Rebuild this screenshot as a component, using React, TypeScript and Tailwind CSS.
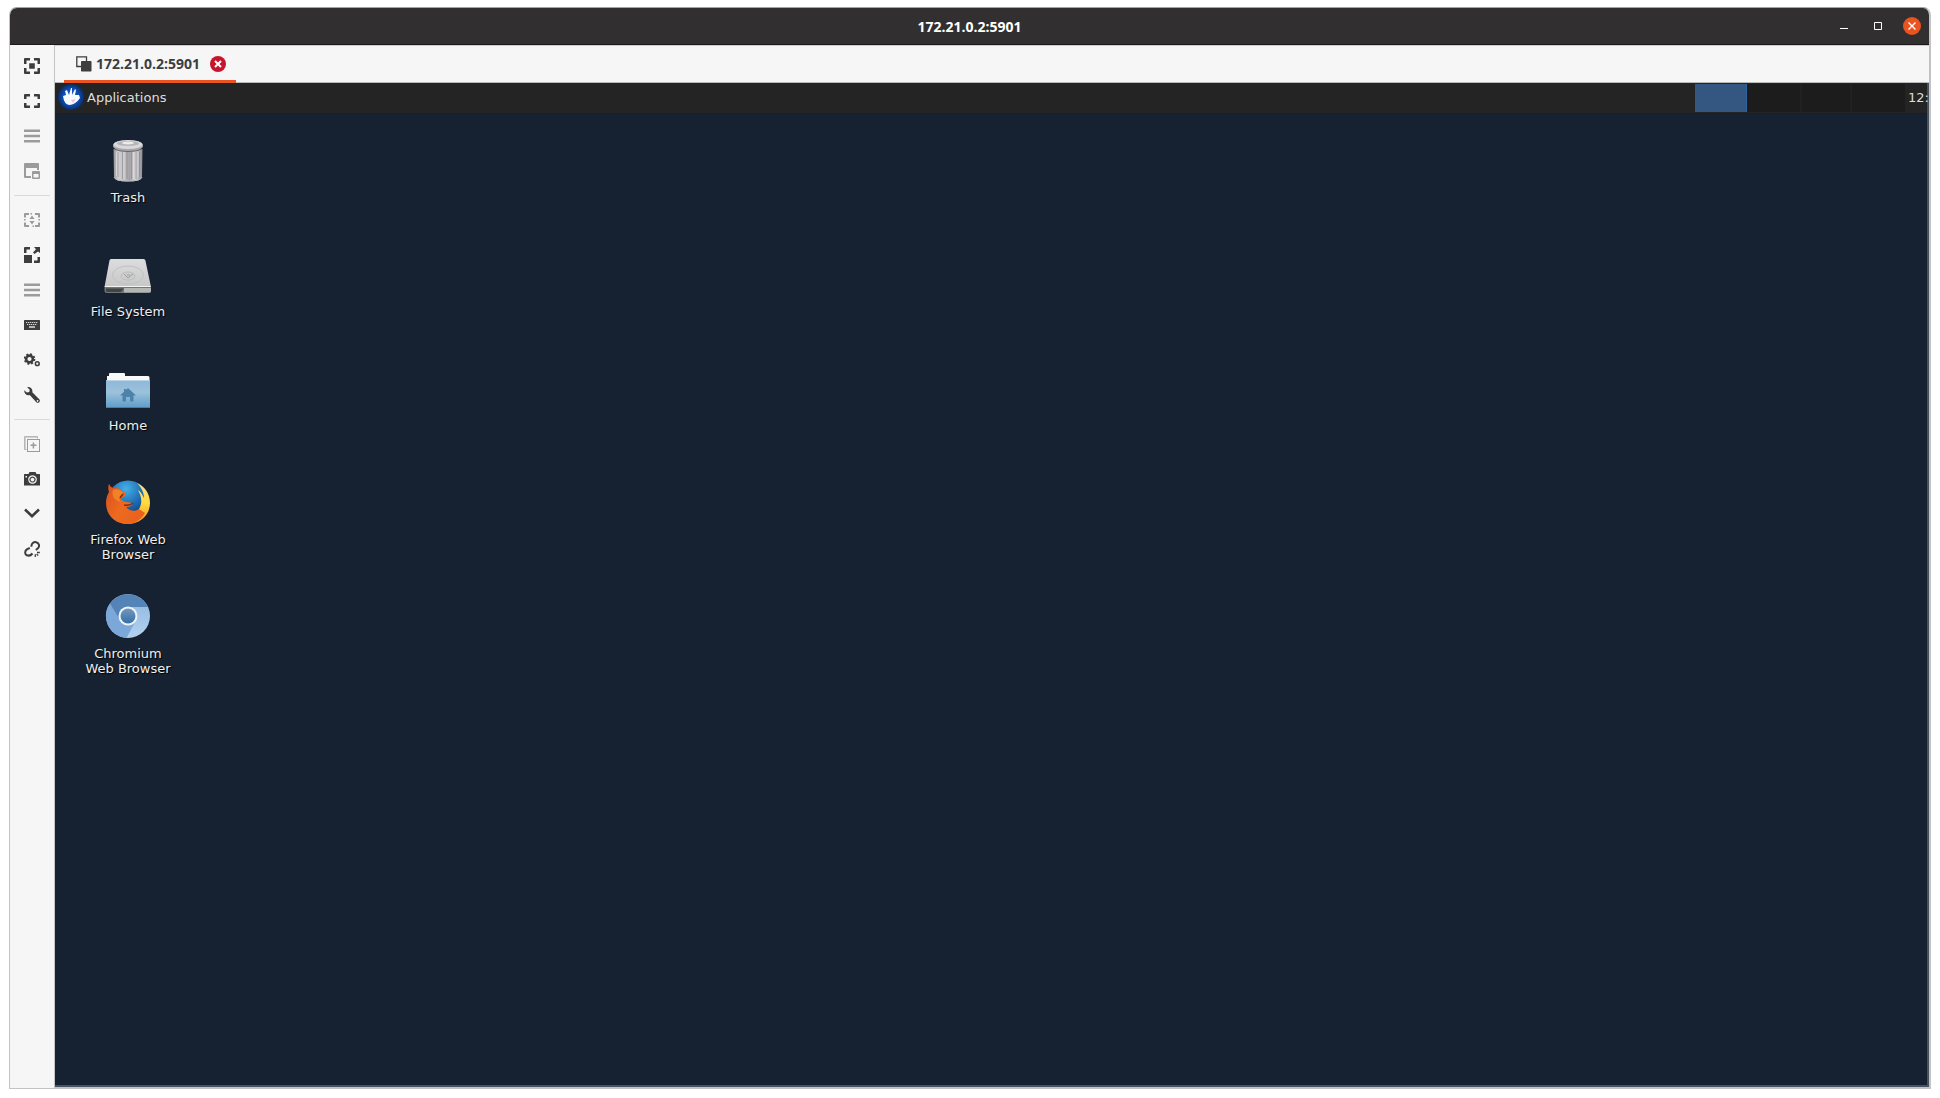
import type { ReactNode } from 'react';

interface ToolItem {
  label: string;
  muted?: boolean;
  icon: ReactNode;
}

interface DesktopItem {
  lines: string[];
  icon: ReactNode;
}

const menuIcon = <path fill="currentColor" d="M0 1.5h16v2.500H0zM0 6.700h16v2.500H0zM0 12h16v2.500H0z" />;

const toolGroups: ToolItem[][] = [
  [
    {
      label: 'Resize window to fit',
      icon: (
        <path
          fill="currentColor"
          d="M0 6V1Q0 0 1 0H6V2.500H2.500V6ZM10 0H15Q16 0 16 1V6H13.500V2.500H10ZM0 10H2.500V13.500H6V16H1Q0 16 0 15ZM13.500 10H16V15Q16 16 15 16H10V13.500H13.500ZM5.200 5.200H10.800V10.800H5.200Z"
        />
      ),
    },
    {
      label: 'Toggle fullscreen',
      icon: (
        <path
          fill="currentColor"
          d="M0 6V2Q0 1 1 1H6V3.500H2.500V6ZM10 1H15Q16 1 16 2V6H13.500V3.500H10ZM0 10H2.500V12.500H6V15H1Q0 15 0 14ZM13.500 10H16V14Q16 15 15 15H10V12.500H13.500Z"
        />
      ),
    },
    { label: 'Multi monitor', muted: true, icon: menuIcon },
    {
      label: 'Switch tab pages',
      muted: true,
      icon: (
        <>
          <path fill="currentColor" d="M1 0H14Q15 0 15 1V7H13V5H2V13H7V15H1Q0 15 0 14V1Q0 0 1 0Z" />
          <path fill="currentColor" fillRule="evenodd" d="M9 8h6q1 0 1 1v6q0 1-1 1H9q-1 0-1-1V9q0-1 1-1zM9.500 11v3.500h5V11z" />
        </>
      ),
    },
  ],
  [
    {
      label: 'Dynamic resolution',
      muted: true,
      icon: (
        <>
          <path
            fill="currentColor"
            d="M0 5.500V2Q0 1 1 1H5V3H2V5.500ZM11 1H15Q16 1 16 2V5.500H14V3H11ZM0 10.500H2V13H5V15H1Q0 15 0 14ZM14 10.500H16V14Q16 15 15 15H11V13H14Z"
          />
          <path fill="currentColor" d="M5.500 7L8 3.500L10.500 7ZM5.500 9H10.500L8 12.500ZM6.500 1h1.500v1.500h-1.500zM8.500 13.500h1.500V15h-1.500zM0 7h1.500v1.500H0zM14.500 7H16v1.500h-1.500z" />
        </>
      ),
    },
    {
      label: 'Scaled mode',
      icon: (
        <path
          fill="currentColor"
          d="M0 8H8V16H0ZM0 6V1Q0 0 1 0H6V2.500H2.500V6ZM10 0H16V6L14 4.500L10.500 7L9 5.500L12 2.200ZM13.500 10H16V15Q16 16 15 16H10V13.500H13.500Z"
        />
      ),
    },
    { label: 'Keyboard shortcuts menu', muted: true, icon: menuIcon },
    {
      label: 'Grab keyboard',
      icon: (
        <>
          <rect x="0" y="3" width="16" height="10" rx=".5" fill="currentColor" />
          <path stroke="#d8d8d8" strokeWidth="1" strokeDasharray="1.300 .700" d="M2 5.500h12M3 7.500h10" />
          <path fill="#b5b5b5" d="M5 9h6v2H5z" />
        </>
      ),
    },
    {
      label: 'Preferences',
      icon: (
        <g fill="none" stroke="currentColor">
          <circle cx="5.500" cy="7" r="3.400" strokeWidth="2.600" />
          <circle cx="5.500" cy="7" r="5" strokeWidth="1.600" strokeDasharray="2 1.927" />
          <circle cx="13.300" cy="11.700" r="1.900" strokeWidth="1.500" />
        </g>
      ),
    },
    {
      label: 'Tools',
      icon: (
        <path
          fill="currentColor"
          fillRule="evenodd"
          d="M3.200.2C6.500-.4 9 2.200 8.300 5.200L15.500 12.400Q16.400 14 15.200 15.300Q14 16.300 12.600 15.400L5.700 8.100C3 8.900.1 7 .2 3.300L2.900 5.600L5.300 5L5.700 2.700ZM13.500 13.100a.8.8 0 1 0 .1 0z"
        />
      ),
    },
  ],
  [
    {
      label: 'Duplicate connection',
      muted: true,
      icon: (
        <g fill="none" stroke="currentColor">
          <path strokeWidth="1" d="M2.500 13.500H.5V.5H13.500V2.500" opacity=".7" />
          <path strokeWidth="1" d="M1.500 13V1.500H13" opacity=".4" />
          <rect x="3.500" y="3.500" width="12" height="12" />
          <path strokeWidth="1.500" d="M6.500 9.300h6M9.400 6.500v6" />
        </g>
      ),
    },
    {
      label: 'Screenshot',
      icon: (
        <path
          fill="currentColor"
          fillRule="evenodd"
          d="M5.500 1H11.500L12.500 3H15.500Q16 3 16 3.500V14.500H0V3.500Q0 3 .5 3H4.500ZM8.500 4.200a4.300 4.300 0 1 0 .01 0zM8.500 5.400a3.100 3.100 0 1 1-.01 0zM8.500 6.700a1.900 1.900 0 1 0 .01 0zM1.500 5v1.500H3V5z"
        />
      ),
    },
    { label: 'Minimize', icon: <path fill="none" stroke="currentColor" strokeWidth="2.600" d="M1 3.500L8 10.300L15 3.500" /> },
    {
      label: 'Disconnect',
      icon: (
        <g fill="none" stroke="currentColor" strokeWidth="2">
          <path d="M7.400 5.800C7.200 2.500 9.800.7 12.200 1.200C15.300 2 15.900 5.400 13.900 7.300L11.900 9" />
          <path d="M5.800 7L3.200 8.100C.4 9.900.6 13.200 2.900 14.300C5.600 15.300 7.500 13.700 8.500 12.500" />
          <path strokeWidth="1.300" d="M13 11.500H15.800M12.600 13L14.200 14.600M11.300 13.300V16" />
        </g>
      ),
    },
  ],
];

const desktopItems: DesktopItem[] = [
  {
    lines: ['Trash'],
    icon: (
      <>
        <defs>
          <linearGradient id="can">
            <stop offset="0" stopColor="#8f8e92" />
            <stop offset=".15" stopColor="#d2d0d2" />
            <stop offset=".38" stopColor="#c3c1c4" />
            <stop offset=".55" stopColor="#a3a1a5" />
            <stop offset=".75" stopColor="#d6d4d6" />
            <stop offset="1" stopColor="#8b8b91" />
          </linearGradient>
        </defs>
        <path fill="url(#can)" d="M9.500 12L10 40Q10.500 44.500 24 44.500T38 40L38.500 12Z" />
        <path stroke="#77767a" strokeWidth="1" opacity=".5" d="M14 15V40M18.500 15V42M23 15V42M27.500 15V42M32 15V42M35.500 15V40" />
        <path stroke="#e9e7e9" strokeWidth="1" opacity=".6" d="M12.500 15V39M20 15V42M29.500 15V42M34 15V40" />
        <path fill="none" stroke="#b4bcc5" d="M10 40Q11 44 24 44T38 40" />
        <ellipse cx="24" cy="9" rx="15" ry="5.500" fill="#a9a9ad" />
        <ellipse cx="24" cy="7.500" rx="14.500" ry="4.500" fill="#d9d8da" />
        <ellipse cx="24" cy="6.500" rx="11" ry="2.500" fill="#b5b4b7" />
        <ellipse cx="24" cy="6" rx="6" ry="1.500" fill="#ececed" />
        <path fill="none" stroke="#65656b" d="M10 12Q15 14.500 24 14.500T38 12" />
      </>
    ),
  },
  {
    lines: ['File System'],
    icon: (
      <>
        <defs>
          <linearGradient id="drive" x2="0" y2="1">
            <stop offset="0" stopColor="#dcdddc" />
            <stop offset="1" stopColor="#c6c7c6" />
          </linearGradient>
        </defs>
        <path fill="#727774" d="M.5 35H47V40Q47 42 45 42H3Q.5 42 .5 40Z" />
        <path fill="#b4b7b3" d="M20 37H47V40Q47 41.500 45 41.500H20Z" />
        <path fill="#3f4448" d="M2 37.500H20L17 41H4Q2 41 2 39.500Z" />
        <path fill="url(#drive)" d="M7 8H39.500Q41 8 41.400 9.500L47 36H.5L5.500 9.500Q5.800 8 7 8Z" />
        <path fill="none" stroke="#f4f4f2" d="M1 35.500H46.500" />
        <ellipse cx="24" cy="24" rx="15.500" ry="9" fill="none" stroke="#c0c2c1" />
        <ellipse cx="24" cy="25" rx="7" ry="4" fill="#cdcfce" stroke="#bbbdbc" />
        <path fill="none" stroke="#999d9d" d="M20 23L24 27L29 23M23 24H26" />
      </>
    ),
  },
  {
    lines: ['Home'],
    icon: (
      <>
        <defs>
          <linearGradient id="folder" x2="0" y2="1">
            <stop offset="0" stopColor="#8fb9d8" />
            <stop offset=".45" stopColor="#9bc1dc" />
            <stop offset="1" stopColor="#5e9cc9" />
          </linearGradient>
        </defs>
        <path fill="#f8f9fa" d="M5 9Q5 8 6 8H20Q21 8 21 9V11H44Q45.500 11 45.500 12.500V18H3V11H5Z" />
        <rect x="2" y="15" width="44" height="28" rx="1" fill="url(#folder)" />
        <path stroke="#bad4e7" d="M2.500 15.500H45.500" />
        <path stroke="#467ea8" d="M3 42.500H45" />
        <path fill="#4e82a8" d="M24 23L32 30.500H29.500V36.500H26V32H22V36.500H18.500V30.500H16L20 26.700V24H22V25Z" />
      </>
    ),
  },
  {
    lines: ['Firefox Web', 'Browser'],
    icon: (
      <>
        <defs>
          <radialGradient id="globe" cx=".45" cy=".2" r=".8">
            <stop offset="0" stopColor="#45b0e6" />
            <stop offset=".5" stopColor="#1e6cb4" />
            <stop offset="1" stopColor="#0b2b66" />
          </radialGradient>
          <linearGradient id="fox" x1="0" y1=".2" x2="1" y2=".8">
            <stop offset="0" stopColor="#d9541e" />
            <stop offset=".45" stopColor="#ee6a20" />
            <stop offset="1" stopColor="#e8601c" />
          </linearGradient>
          <linearGradient id="tail" x2="0" y2="1">
            <stop offset="0" stopColor="#f6e18c" />
            <stop offset=".5" stopColor="#ffd93d" />
            <stop offset="1" stopColor="#f38f1f" />
          </linearGradient>
        </defs>
        <circle cx="24" cy="22" r="20.500" fill="url(#globe)" />
        <path
          fill="url(#tail)"
          d="M33 4C42 8 46 16 46 24C46 36 36 45 24 45C19 45 15 43 12 41C26 42 35 34 37 25C38 19 36 15 34 11C38 14 39 17 40 19C40 13 37 8 33 4Z"
        />
        <path
          fill="url(#fox)"
          d="M5 5C6 7 7 8 9 9C13 8 17 10 19 13C21 13 23 14 21 17C19 18 18 19 17 20C18 22 20 23 23 23L29 24C28 27 25 28 22 28C25 32 31 33 35 30L41 34C37 41 30 45 23 45C11 45 2 36 2 24C2 20 3 16 5 13C4 10 4 7 5 5Z"
        />
        <path fill="#f58a2b" opacity=".8" d="M9 11C13 9 17 11 19 14L16 17C15 19 15 21 17 23C11 22 7 17 9 11Z" />
        <path fill="none" stroke="#7c3013" strokeWidth="1.500" d="M19 15L16 19M20 26Q26 27 29 24" />
      </>
    ),
  },
  {
    lines: ['Chromium', 'Web Browser'],
    icon: (
      <>
        <defs>
          <linearGradient id="light" x2="0" y2="1">
            <stop offset="0" stopColor="#8db5de" />
            <stop offset="1" stopColor="#b3d2ef" />
          </linearGradient>
          <linearGradient id="core" x2="0" y2="1">
            <stop offset="0" stopColor="#7298bf" />
            <stop offset="1" stopColor="#376fa5" />
          </linearGradient>
        </defs>
        <circle cx="24" cy="23" r="22" fill="url(#light)" />
        <path fill="#7ba8d8" d="M6 10.500A22 22 0 0 0 22.500 45L32 27L24 14Z" />
        <path fill="#5483b8" d="M6 10.500A22 22 0 0 1 42.200 11Q43.500 13 44 14H24A9 9 0 0 0 15.500 26Z" />
        <circle cx="24" cy="23" r="9.500" fill="#edf3f9" />
        <circle cx="24" cy="23" r="7.500" fill="url(#core)" />
      </>
    ),
  },
];

function WindowHeader() {
  return (
    <header className="grid h-[37px] shrink-0 grid-cols-[1fr_auto_1fr] items-center border-b border-[#1c1a1b] bg-[#322f30] text-white">
      <h1 className="col-start-2 pt-0.5 text-sm leading-5 font-bold">172.21.0.2:5901</h1>
      <div className="flex justify-end">
        <button type="button" aria-label="Minimize window" className="flex h-9 w-[34px] items-center justify-center">
          <svg className="size-[18px]" viewBox="0 0 18 18">
            <path stroke="currentColor" d="M5 11.500H13" />
          </svg>
        </button>
        <button type="button" aria-label="Maximize window" className="flex h-9 w-[34px] items-center justify-center">
          <svg className="size-[18px]" viewBox="0 0 18 18">
            <path fill="none" stroke="currentColor" d="M5.500 5.500H12.500V12.500H5.500Z" />
          </svg>
        </button>
        <button type="button" aria-label="Close window" className="flex h-9 w-[34px] items-center justify-center">
          <svg className="size-[18px] rounded-full bg-[#e95420]" viewBox="0 0 18 18">
            <path stroke="currentColor" strokeWidth="1.400" d="M5.500 5.500L12.500 12.500M12.500 5.500L5.500 12.500" />
          </svg>
        </button>
      </div>
    </header>
  );
}

function Toolbar() {
  return (
    <nav aria-label="Connection tools" className="flex w-[45px] shrink-0 flex-col border-r border-[#c3c3c3] bg-[#f6f6f6] px-1 pt-1">
      {toolGroups.map((group, index) => (
        <div key={index}>
          {index > 0 && <hr className="mt-1.5 mb-[7px] border-[#dadada]" />}
          {group.map((tool) => (
            <button
              key={tool.label}
              type="button"
              aria-label={tool.label}
              className={`mb-px flex h-[34px] w-full items-center justify-center ${tool.muted ? 'text-[#9b9b9b]' : 'text-[#3d3d3d]'}`}
            >
              <svg className="size-4" viewBox="0 0 16 16">
                {tool.icon}
              </svg>
            </button>
          ))}
        </div>
      ))}
    </nav>
  );
}

function TabBar() {
  return (
    <div className="flex h-[38px] shrink-0 border-y border-t-[#cdcdcd] border-b-[#b9b9b9] bg-[#f6f6f6] pl-[9px]">
      <div className="-mb-px flex items-center border-b-3 border-[#e95420] px-[10px] pt-0.5 text-[#3d3d3d]">
        <button type="button" className="flex items-center gap-1 pl-0.5 text-sm leading-5 font-bold">
          <svg className="size-4" viewBox="0 0 16 16">
            <path fill="none" stroke="currentColor" strokeWidth="1.300" d="M5 10.500H.8V.8H10.500V5" />
            <rect x="5" y="5" width="10.500" height="10.500" rx=".8" fill="currentColor" />
          </svg>
          172.21.0.2:5901
        </button>
        <button type="button" aria-label="Close tab" className="ml-[10px]">
          <svg className="size-4 rounded-full bg-[#c7162b] text-white" viewBox="0 0 16 16">
            <path stroke="currentColor" strokeWidth="2" d="M5 5L11 11M11 5L5 11" />
          </svg>
        </button>
      </div>
    </div>
  );
}

function Panel() {
  return (
    <div className="flex h-[31px] shrink-0 items-center border-b border-[#1b1d20] bg-[#242424] text-[13px] leading-[15px] text-[#dedede]">
      <button type="button" className="flex items-center gap-px pb-0.5 pl-[3px]">
        <svg className="size-7" viewBox="0 0 28 28">
          <defs>
            <radialGradient id="badge">
              <stop offset="0" stopColor="#1b66cf" />
              <stop offset=".7" stopColor="#0c47a4" />
              <stop offset="1" stopColor="#0a2c68" />
            </radialGradient>
          </defs>
          <circle cx="13" cy="14" r="13" fill="url(#badge)" />
          <path
            fill="#f5faff"
            d="M5 13L8 12L7 8L9 7L11 12L13 5L14 5L14 12L17 6L18 7L17 12L21 12L22 15Q18 21 12 22Q6 22 5 13Z"
          />
          <path fill="#f2c3d8" d="M13 17L18 16L15 20Z" />
        </svg>
        <span>Applications</span>
      </button>
      <div className="ml-auto flex h-7 bg-[#1c1c1c]">
        <button type="button" aria-label="Workspace 1" className="w-[52px] border-r border-[#2f62a0] bg-[#345781]" />
        <button type="button" aria-label="Workspace 2" className="w-[55px] border-r-2 border-[#212121]" />
        <button type="button" aria-label="Workspace 3" className="w-[50px] border-r-2 border-[#212121]" />
        <button type="button" aria-label="Workspace 4" className="w-[53px]" />
      </div>
      <time className="w-[22px] pb-0.5 pl-[3px] whitespace-nowrap">12:</time>
    </div>
  );
}

function Desktop() {
  return (
    <ul className="flex grow flex-col bg-[#162232] pt-[23px] pl-[18px] text-[13px] leading-[15px] text-[#eeeeee]">
      {desktopItems.map((item) => (
        <li key={item.lines[0]} className="h-[114px] w-[110px]">
          <button type="button" className="flex w-full flex-col items-center gap-[5px]">
            <svg className="size-12" viewBox="0 0 48 48">
              {item.icon}
            </svg>
            <span className="text-shadow-[1px_1px_1px_#000000]">
              {item.lines.map((line) => (
                <span key={line} className="block">
                  {line}
                </span>
              ))}
            </span>
          </button>
        </li>
      ))}
    </ul>
  );
}

export default function App() {
  return (
    <div className="flex min-h-screen bg-white pt-[7px] pr-[9px] pb-[9px] pl-[9px] font-['Open_Sans','Noto_Sans',sans-serif]">
      <main className="flex grow flex-col overflow-hidden rounded-t-lg border border-r-2 border-[#c3c3c3] border-t-[#a3a3a3]">
        <WindowHeader />
        <div className="flex grow">
          <Toolbar />
          <div className="flex min-w-0 grow flex-col">
            <TabBar />
            <div className="flex grow flex-col border-b border-[#c3c3c3] font-['DejaVu_Sans',sans-serif]">
              <div className="flex grow flex-col border-r-2 border-b-2 border-[#465260]">
                <Panel />
                <Desktop />
              </div>
            </div>
          </div>
        </div>
      </main>
    </div>
  );
}
